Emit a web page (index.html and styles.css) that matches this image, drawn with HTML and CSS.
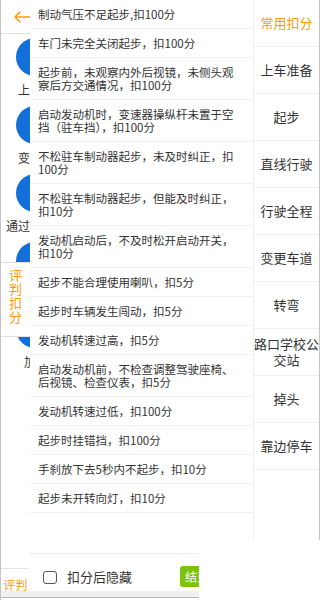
FILE: index.html
```html
<!DOCTYPE html>
<html lang="zh">
<head>
<meta charset="utf-8">
<title>扣分</title>
<link rel="stylesheet" href="styles.css">
</head>
<body>
<div class="page">
  <div class="hdr">
    <svg class="back" width="18" height="12" viewBox="0 0 18 12"><path d="M17 6H2M7 1L2 6l5 5" fill="none" stroke="#ff9a0a" stroke-width="1.6" stroke-linecap="round" stroke-linejoin="round"/></svg>
  </div>
  <div class="grid">
    <div class="cell"><span class="dot"></span><span class="lbl">上车准备</span></div>
    <div class="cell"><span class="dot"></span><span class="lbl">变更车道</span></div>
    <div class="cell"><span class="dot"></span><span class="lbl">通过路口学校</span></div>
    <div class="cell"><span class="dot"></span><span class="lbl">靠边停车</span></div>
    <div class="cell"><span class="dot"></span><span class="lbl">加减挡</span></div>
  </div>
  <div class="tab-v">评<br>判<br>扣<br>分</div>
  <div class="tab-b">评判</div>
</div>

<div class="drawer">
  <ul class="list">
    <li>制动气压不足起步,扣100分</li>
    <li>车门未完全关闭起步，扣100分</li>
    <li>起步前，未观察内外后视镜，未侧头观察后方交通情况，扣100分</li>
    <li>启动发动机时，变速器操纵杆未置于空挡（驻车挡），扣100分</li>
    <li>不松驻车制动器起步，未及时纠正，扣100分</li>
    <li>不松驻车制动器起步，但能及时纠正，扣10分</li>
    <li>发动机启动后，不及时松开启动开关，扣10分</li>
    <li>起步不能合理使用喇叭，扣5分</li>
    <li>起步时车辆发生闯动，扣5分</li>
    <li>发动机转速过高，扣5分</li>
    <li>启动发动机前，不检查调整驾驶座椅、后视镜、检查仪表，扣5分</li>
    <li>发动机转速过低，扣100分</li>
    <li>起步时挂错挡，扣100分</li>
    <li>手刹放下去5秒内不起步，扣10分</li>
    <li>起步未开转向灯，扣10分</li>
  </ul>
  <ul class="side">
    <li class="on">常用扣分</li>
    <li>上车准备</li>
    <li>起步</li>
    <li>直线行驶</li>
    <li>行驶全程</li>
    <li>变更车道</li>
    <li>转弯</li>
    <li>路口学校公<br>交站</li>
    <li>掉头</li>
    <li>靠边停车</li>
  </ul>
</div>

<div class="foot">
  <span class="box"></span>
  <span class="chk-lbl">扣分后隐藏</span>
  <span class="end">结束</span>
</div>
</body>
</html>
```

FILE: styles.css
```css
html, body {
  margin: 0;
  padding: 0;
}
body {
  width: 320px;
  height: 600px;
  overflow: hidden;
  position: relative;
  background: #fff;
  font-family: "Noto Sans CJK SC", "Noto Sans", sans-serif;
  color: #333;
}
ul {
  list-style: none;
  margin: 0;
  padding: 0;
}

/* background page */
.page {
  position: relative;
  height: 600px;
  border-left: 1px solid #c4c4c4;
  box-sizing: border-box;
}
.hdr {
  height: 33px;
  border-bottom: 1px solid #e3e3e3;
  display: flex;
  align-items: center;
  padding-left: 12px;
}
.back {
  display: block;
}
.grid {
  padding-top: 4px;
  width: 29px;
  overflow: hidden;
}
.cell {
  display: flex;
  flex-direction: column;
  width: 82px;
  height: 68px;
}
.dot {
  display: block;
  width: 38px;
  height: 38px;
  border-radius: 50%;
  background: #1370d9;
  margin-left: 15px;
}
.lbl {
  margin-top: 6px;
  font-size: 12px;
  line-height: 16px;
  text-align: center;
  white-space: nowrap;
  color: #333;
}
.tab-v {
  position: absolute;
  left: 0;
  top: 262px;
  width: 29px;
  height: 75px;
  box-sizing: border-box;
  background: #fff;
  border-top: 1px solid #e0e0e0;
  border-bottom: 1px solid #e0e0e0;
  color: #fb9a0e;
  font-size: 13px;
  line-height: 14px;
  text-align: center;
  padding-top: 5px;
}
.tab-b {
  position: absolute;
  left: 0;
  top: 568px;
  width: 29px;
  height: 32px;
  box-sizing: border-box;
  border-top: 1px solid #e3e3e3;
  background: linear-gradient(to bottom, #fff 22px, #f0f0f0 22px, #f0f0f0 28px, #b8b8b8 28px, #b8b8b8 29px, #fff 29px);
  color: #fb9a0e;
  font-size: 12px;
  line-height: 14px;
  text-align: center;
  padding-top: 9px;
}

/* drawer overlay */
.drawer {
  position: absolute;
  left: 30px;
  top: 0;
  width: 290px;
  height: 540px;
  display: flex;
  background: #fff;
}
.list {
  width: 223px;
  flex: none;
}
.list li {
  padding: 8px 10px 7px 8px;
  font-size: 11.5px;
  line-height: 13px;
  color: #333;
  border-bottom: 1px solid #f1f1f1;
}
.side {
  width: 67px;
  flex: none;
  box-sizing: border-box;
  border-left: 1px solid #ededed;
  border-right: 1px solid #c4c4c4;
}
.side li {
  height: 47px;
  box-sizing: border-box;
  border-bottom: 1px solid #f0f0f0;
  display: flex;
  align-items: center;
  justify-content: center;
  text-align: center;
  font-size: 13px;
  line-height: 16px;
  color: #333;
  white-space: nowrap;
}
.side li.on {
  color: #fb9a0e;
}

/* footer overlay */
.foot {
  position: absolute;
  left: 29px;
  top: 553px;
  width: 170px;
  height: 47px;
  box-sizing: border-box;
  border-top: 1px solid #ededed;
  background: linear-gradient(to bottom, #fff 37px, #f0f0f0 37px, #f0f0f0 43px, #b8b8b8 43px, #b8b8b8 44px, #fff 44px);
  overflow: hidden;
  display: flex;
  align-items: flex-start;
  padding-left: 14px;
}
.box {
  flex: none;
  width: 14px;
  height: 13px;
  box-sizing: border-box;
  border: 1.5px solid #555;
  border-radius: 3px;
  margin-top: 17px;
}
.chk-lbl {
  flex: none;
  margin-left: 10px;
  margin-top: 14px;
  font-size: 13px;
  line-height: 18px;
  color: #333;
}
.end {
  flex: none;
  margin-left: 48px;
  margin-top: 12px;
  width: 50px;
  height: 21px;
  border-radius: 3px;
  background: #7cc30e;
  color: #fff;
  font-size: 12px;
  line-height: 21px;
  padding-left: 5px;
  box-sizing: border-box;
}
```
